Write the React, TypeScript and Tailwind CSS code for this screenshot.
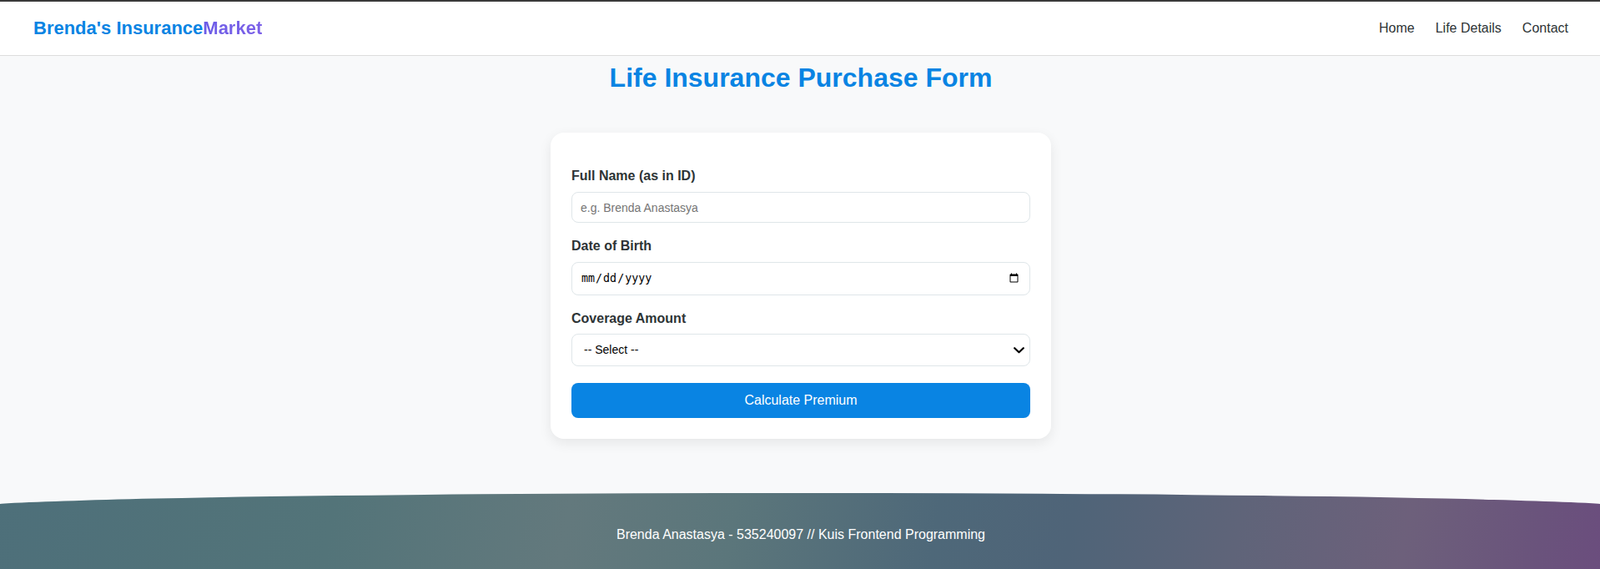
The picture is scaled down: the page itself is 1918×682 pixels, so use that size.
import React from "react";

export default function App() {
  const font = { fontFamily: '"Liberation Sans", Arial, sans-serif' };
  return (
    <div className="min-h-screen bg-[#f8f9fa] text-[#2d3436]" style={font}>
      <div className="h-[2px] bg-[#3a3a3a]" />
      <header className="flex h-[65px] items-center justify-between border-b border-[#dddddd] bg-white pl-10 pr-[38px]">
        <div className="text-[22px] font-bold leading-[normal]">
          <span className="text-[#0984e3]">Brenda's Insurance</span>
          <span className="bg-gradient-to-r from-[#6c5ce7] to-[#7d62e8] bg-clip-text text-transparent">Market</span>
        </div>
        <nav className="flex items-center gap-[25px] text-[16px] leading-[normal] text-[#2d3436]">
          <a href="#">Home</a>
          <a href="#">Life Details</a>
          <a href="#">Contact</a>
        </nav>
      </header>

      <main className="flex flex-col items-center pl-[2px]">
        <h1 className="mt-[8px] text-[32px] font-bold leading-[normal] text-[#0984e3]">
          Life Insurance Purchase Form
        </h1>

        <form className="mt-[47px] w-[600px] rounded-2xl bg-white px-[25px] pb-[25px] pt-[43px] shadow-[0_5px_15px_rgba(0,0,0,0.08)]">
          <div className="mb-[19px]">
            <label className="mb-[10px] block text-[16px] font-bold leading-[18px]">Full Name (as in ID)</label>
            <input
              type="text"
              placeholder="e.g. Brenda Anastasya"
              className="block h-[37px] w-full rounded-lg border border-[#dfe6e9] bg-white px-[10px] text-[14px] placeholder:text-[#757575]"
            />
          </div>
          <div className="mb-[19px]">
            <label className="mb-[10px] block text-[16px] font-bold leading-[18px]">Date of Birth</label>
            <input
              type="date"
              className="block h-[40px] w-full rounded-lg border border-[#dfe6e9] bg-white px-[10px] text-[13.333px] text-black"
              style={{ fontFamily: '"DejaVu Sans Mono", monospace' }}
            />
          </div>
          <div className="mb-[20px]">
            <label className="mb-[9px] block text-[16px] font-bold leading-[18px]">Coverage Amount</label>
            <div className="relative">
              <select className="block h-[39px] w-full appearance-none rounded-lg border border-[#dfe6e9] bg-white pl-[14px] pr-[30px] text-[14px] text-black">
                <option>-- Select --</option>
                <option>Rp 100.000.000</option>
                <option>Rp 500.000.000</option>
                <option>Rp 1.000.000.000</option>
              </select>
              <svg
                className="pointer-events-none absolute right-[7px] top-[16px]"
                width="13"
                height="8"
                viewBox="0 0 13 8"
                fill="none"
              >
                <path d="M1.2 1.2 L6.5 6.3 L11.8 1.2" stroke="#000" strokeWidth="2.2" strokeLinecap="round" strokeLinejoin="round" />
              </svg>
            </div>
          </div>
          <button
            type="button"
            className="block h-[42px] w-full rounded-lg bg-[#0984e3] text-[16px] text-white"
          >
            Calculate Premium
          </button>
        </form>
      </main>

      <footer className="mt-[65px] overflow-hidden">
        <div className="-mx-[41px] rounded-tl-[50%_18px] rounded-tr-[50%_18px] bg-[linear-gradient(100deg,#4d6f7a_0%,#537479_22%,#63797d_36%,#5b767b_46%,#4e6879_58%,#4f6478_66%,#5f6479_76%,#6d607b_86%,#6a537c_94%,#6b4a7e_100%)] pb-[40px] pl-[2px] pt-[41px] text-center text-[16px] leading-[normal] text-white">
          Brenda Anastasya - 535240097 // Kuis Frontend Programming
        </div>
      </footer>
    </div>
  );
}
